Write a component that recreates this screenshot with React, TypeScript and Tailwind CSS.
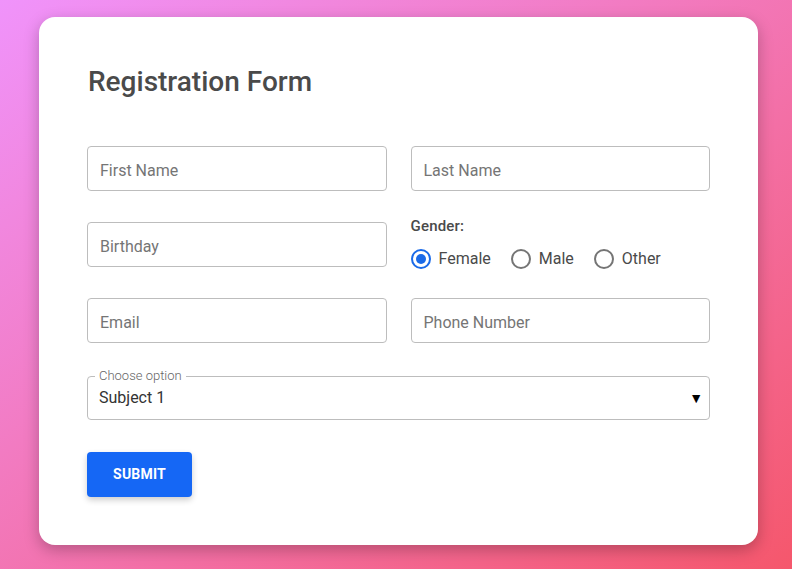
import React from "react";

const font = { fontFamily: "Roboto, 'Liberation Sans', sans-serif" };

function Field({ placeholder }: { placeholder: string }) {
  return (
    <input
      placeholder={placeholder}
      className="h-[45px] w-full rounded-[4px] border border-[#bdbdbd] px-3 pt-[3px] text-[16px] text-[#333] placeholder:text-[#757575] outline-none"
      style={font}
    />
  );
}

function Radio({ label, checked }: { label: string; checked?: boolean }) {
  return (
    <label className="flex items-center gap-2 cursor-pointer">
      <span
        className={`flex h-[20px] w-[20px] items-center justify-center rounded-full border-2 ${
          checked ? "border-[#1a6ae8]" : "border-[#757575]"
        }`}
      >
        {checked && <span className="h-[10px] w-[10px] rounded-full bg-[#1a6ae8]" />}
      </span>
      <span className="text-[16px] text-[#4a4a4a]">{label}</span>
    </label>
  );
}

export default function App() {
  return (
    <div
      className="min-h-[569px] w-full bg-[linear-gradient(to_right_bottom,#f093fb,#f5576c)] pt-[17px] pb-[24px] pl-[39px] pr-[34px]"
      style={font}
    >
      <div className="w-[719px] rounded-[16px] bg-white px-[48px] pt-[49px] pb-[48px] shadow-[0_5px_15px_rgba(0,0,0,0.25)]">
        <h2 className="text-[28px] font-medium leading-[32px] text-[#4a4a4a] pl-px">Registration Form</h2>
        <div className="mt-[48px] grid grid-cols-2 gap-x-[24px] gap-y-[31px]">
          <Field placeholder="First Name" />
          <Field placeholder="Last Name" />
          <Field placeholder="Birthday" />
          <div className="flex h-[45px] flex-col">
            <div className="-mt-[5px] text-[15px] font-medium leading-[18px] text-[#4a4a4a] tracking-[0.2px]">Gender:</div>
            <div className="mt-[12px] flex items-center gap-[20px]">
              <Radio label="Female" checked />
              <Radio label="Male" />
              <Radio label="Other" />
            </div>
          </div>
          <Field placeholder="Email" />
          <Field placeholder="Phone Number" />
        </div>
        <fieldset className="relative mt-[26px] h-[51px] rounded-[4px] border border-[#bdbdbd] pl-[7px] pr-[11px]">
          <legend className="px-[4px] text-[13px] font-light leading-[14px] text-[#666]">Choose option</legend>
          <div className="flex items-center justify-between pl-[4px] pt-[3px]">
            <span className="text-[16px] text-[#333]">Subject 1</span>
            <span className="text-[14px] text-black mr-[-5px]">▼</span>
          </div>
        </fieldset>
        <button className="mt-[32px] h-[45px] w-[105px] rounded-[4px] bg-[#1567f5] text-[14px] font-bold tracking-[0.2px] text-white shadow-[0_3px_6px_rgba(0,0,0,0.2)]">
          SUBMIT
        </button>
      </div>
    </div>
  );
}
